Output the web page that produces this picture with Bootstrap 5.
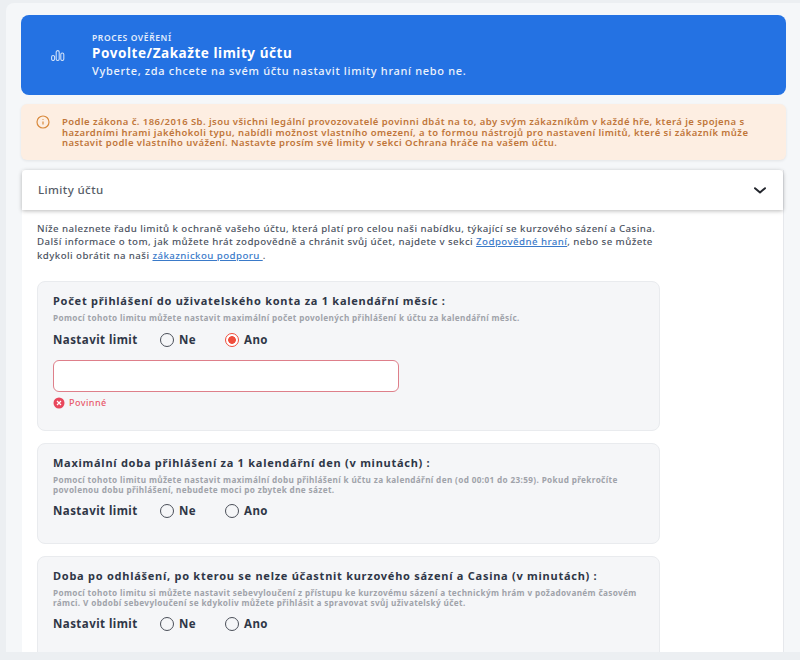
<!DOCTYPE html>
<html lang="cs">
<head>
  <meta charset="UTF-8" />
  <title>Limity účtu</title>
  <link href="https://cdn.jsdelivr.net/npm/bootstrap@5.3.0/dist/css/bootstrap.min.css" rel="stylesheet" />
  <style>
    html, body { height: 660px; overflow: hidden; }
    body {
      background: #eceff2;
      font-family: "Noto Sans", sans-serif;
      color: #3b4252;
    }
    .page-panel {
      height: 649px;
      margin: 3px 0 0 6px;
      padding: 12px 14px 0 15px;
      background: #f5f7f9;
      border-radius: 8px 0 0 0;
      overflow: hidden;
    }
    .hero-box {
      height: 80px;
      background: #2472e3;
      border-radius: 8px;
      color: #fff;
    }
    .hero-icon { width: 71px; padding-left: 2px; }
    .hero-kicker { font-size: 8.5px; font-weight: 600; line-height: 12px; letter-spacing: .6px; color: #e3edfb; }
    .hero-title { font-size: 13.5px; font-weight: 700; line-height: 19px; letter-spacing: .55px; }
    .hero-sub { font-size: 11px; font-weight: 500; line-height: 16px; letter-spacing: .68px; color: #edf3fc; }
    .warn-box {
      height: 56px;
      margin-top: 9px;
      padding: 13px 16px 0 15px;
      background: #fdeee2;
      border-radius: 6px;
      box-shadow: 0 1px 3px rgba(0, 0, 0, .08);
      color: #c0763a;
      font-size: 9.5px;
      font-weight: 600;
      line-height: 10.7px;
      letter-spacing: .43px;
    }
    .warn-text { white-space: nowrap; }
    .warn-icon { margin-top: -2px; }
    .limit-wrap { margin: 10px 2px 0 1px; background: #fff; height: 600px; border-right: 1px solid #e6e8ec; }
    .limit-head {
      height: 40px;
      padding: 0 17px 0 16px;
      background: #fff;
      border-radius: 4px 4px 0 0;
      box-shadow: 0 1px 4px rgba(0, 0, 0, .28);
      font-size: 11.5px;
      font-weight: 500;
      letter-spacing: .4px;
      color: #555b66;
    }
    .limit-body { padding: 12px 15px 0 15px; }
    .limit-intro {
      font-size: 9.7px;
      font-weight: 500;
      line-height: 13.4px;
      letter-spacing: .43px;
      color: #4c5361;
      white-space: nowrap;
      margin-bottom: 19px;
    }
    .limit-intro a { color: #3a7ac9; }
    .limit-card {
      width: 623px;
      margin-bottom: 12px;
      padding: 12px 15px 0 15px;
      background: #f5f6f8;
      border: 1px solid #e9ebee;
      border-radius: 8px;
    }
    .limit-card-tall { height: 150px; }
    .limit-card-mid { height: 101px; }
    .limit-card-last { height: 120px; }
    .limit-title { font-size: 11px; font-weight: 700; line-height: 14px; letter-spacing: .74px; color: #2f3747; white-space: nowrap; }
    .limit-note { margin-top: 5px; font-size: 8.2px; font-weight: 700; line-height: 9.3px; letter-spacing: .36px; color: #a0a3aa; white-space: nowrap; }
    .limit-set { margin-top: 7px; height: 20px; font-size: 11.5px; font-weight: 700; letter-spacing: .45px; color: #2f3747; }
    .limit-set > span:first-child { width: 107px; }
    .radio-dot {
      width: 14px; height: 14px; margin-right: 5px;
      border: 1.5px solid #4a4f59;
      border-radius: 50%;
    }
    .radio-dot.on { border-color: #ef4d3c; background: radial-gradient(circle, #ef4d3c 0 3.5px, #fff 4.2px); }
    .radio-opt { width: 65px; }
    .limit-field {
      width: 346px; height: 32px; margin-top: 10px;
      background: #fff;
      border: 1px solid #de7f8a;
      border-radius: 6px;
      display: block;
    }
    .limit-error { margin-top: 5px; height: 13px; font-size: 9px; font-weight: 500; letter-spacing: .45px; color: #e8596b; }
  </style>
</head>
<body>
<div class="page-panel">
  <div class="hero-box d-flex align-items-center">
    <div class="hero-icon d-flex justify-content-center">
      <svg width="14" height="11" viewBox="0 0 14 11" fill="none" stroke="#cfe0f8" stroke-width="1.1">
        <rect x="0.6" y="5.5" width="3" height="5" rx="1.5"/>
        <rect x="5.2" y="0.6" width="3" height="9.9" rx="1.5"/>
        <rect x="9.8" y="3" width="3" height="7.5" rx="1.5"/>
      </svg>
    </div>
    <div>
      <div class="hero-kicker">PROCES OVĚŘENÍ</div>
      <div class="hero-title">Povolte/Zakažte limity účtu</div>
      <div class="hero-sub">Vyberte, zda chcete na svém účtu nastavit limity hraní nebo ne.</div>
    </div>
  </div>

  <div class="warn-box d-flex">
    <svg class="warn-icon flex-shrink-0 me-2" width="14" height="14" viewBox="0 0 14 14" fill="none" stroke="#d98a3d" stroke-width="1.2">
      <circle cx="7" cy="7" r="6"/>
      <path d="M7 6.4v3.2M7 4.2v.9"/>
    </svg>
    <div class="warn-text ms-1">Podle zákona č. 186/2016 Sb. jsou všichni legální provozovatelé povinni dbát na to, aby svým zákazníkům v každé hře, která je spojena s<br>hazardními hrami jakéhokoli typu, nabídli možnost vlastního omezení, a to formou nástrojů pro nastavení limitů, které si zákazník může<br>nastavit podle vlastního uvážení. Nastavte prosím své limity v sekci Ochrana hráče na vašem účtu.</div>
  </div>

  <div class="limit-wrap">
    <div class="limit-head d-flex align-items-center justify-content-between">
      <span>Limity účtu</span>
      <svg width="12" height="7" viewBox="0 0 12 7" fill="none" stroke="#23262d" stroke-width="2" stroke-linecap="round" stroke-linejoin="round">
        <path d="M1 1.2 6 5.4l5-4.2"/>
      </svg>
    </div>
    <div class="limit-body">
      <div class="limit-intro">
        Níže naleznete řadu limitů k ochraně vašeho účtu, která platí pro celou naši nabídku, týkající se kurzového sázení a Casina.<br>
        Další informace o tom, jak můžete hrát zodpovědně a chránit svůj účet, najdete v sekci <a href="#">Zodpovědné hraní</a>, nebo se můžete<br>
        kdykoli obrátit na naši <a href="#">zákaznickou podporu </a>.
      </div>

      <div class="limit-card limit-card-tall">
        <div class="limit-title">Počet přihlášení do uživatelského konta za 1 kalendářní měsíc :</div>
        <div class="limit-note">Pomocí tohoto limitu můžete nastavit maximální počet povolených přihlášení k účtu za kalendářní měsíc.</div>
        <div class="limit-set d-flex align-items-center">
          <span>Nastavit limit</span>
          <span class="radio-opt d-flex align-items-center"><span class="radio-dot"></span>Ne</span>
          <span class="radio-opt d-flex align-items-center"><span class="radio-dot on"></span>Ano</span>
        </div>
        <input class="limit-field" type="text" aria-label="Počet přihlášení">
        <div class="limit-error d-flex align-items-center">
          <svg class="me-1" width="12" height="12" viewBox="0 0 12 12"><circle cx="6" cy="6" r="5.5" fill="#e8475c"/><path d="M4 4l4 4M8 4l-4 4" stroke="#fff" stroke-width="1.2"/></svg>
          Povinné
        </div>
      </div>

      <div class="limit-card limit-card-mid">
        <div class="limit-title">Maximální doba přihlášení za 1 kalendářní den (v minutách) :</div>
        <div class="limit-note">Pomocí tohoto limitu můžete nastavit maximální dobu přihlášení k účtu za kalendářní den (od 00:01 do 23:59). Pokud překročíte<br>povolenou dobu přihlášení, nebudete moci po zbytek dne sázet.</div>
        <div class="limit-set d-flex align-items-center">
          <span>Nastavit limit</span>
          <span class="radio-opt d-flex align-items-center"><span class="radio-dot"></span>Ne</span>
          <span class="radio-opt d-flex align-items-center"><span class="radio-dot"></span>Ano</span>
        </div>
      </div>

      <div class="limit-card limit-card-last">
        <div class="limit-title">Doba po odhlášení, po kterou se nelze účastnit kurzového sázení a Casina (v minutách) :</div>
        <div class="limit-note">Pomocí tohoto limitu si můžete nastavit sebevyloučení z přístupu ke kurzovému sázení a technickým hrám v požadovaném časovém<br>rámci. V období sebevyloučení se kdykoliv můžete přihlásit a spravovat svůj uživatelský účet.</div>
        <div class="limit-set d-flex align-items-center">
          <span>Nastavit limit</span>
          <span class="radio-opt d-flex align-items-center"><span class="radio-dot"></span>Ne</span>
          <span class="radio-opt d-flex align-items-center"><span class="radio-dot"></span>Ano</span>
        </div>
      </div>
    </div>
  </div>
</div>
<script src="https://cdn.jsdelivr.net/npm/bootstrap@5.3.0/dist/js/bootstrap.bundle.min.js"></script>
</body>
</html>
